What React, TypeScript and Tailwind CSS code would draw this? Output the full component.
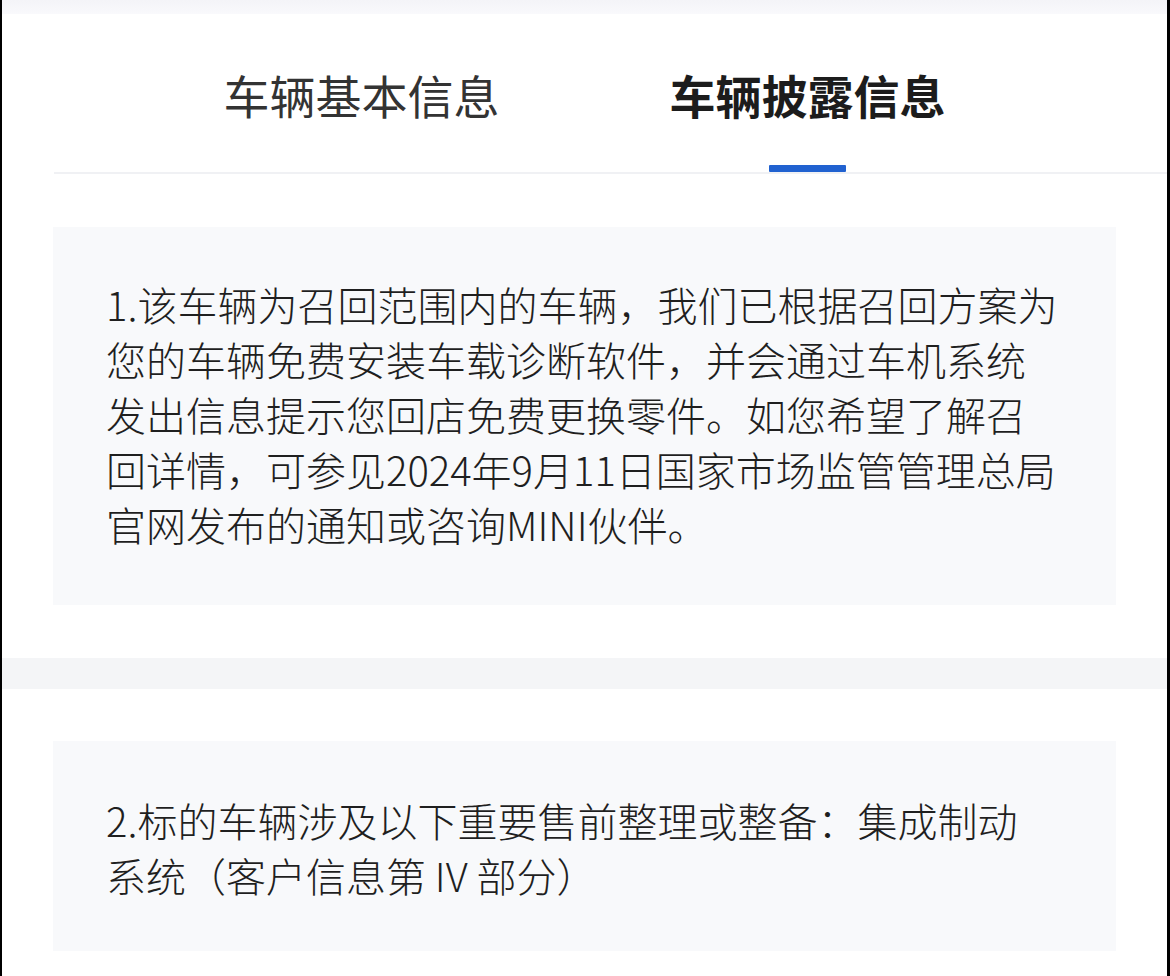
import React from "react";

const font = { fontFamily: '"Noto Sans CJK SC", "Noto Sans", sans-serif' };

export default function App() {
  return (
    <div
      className="w-[1170px] h-[976px] overflow-hidden bg-white border-l-2 border-r-[3px] border-black flex flex-col"
      style={font}
    >
      <div className="h-[14px] bg-gradient-to-b from-[#f4f4f8] to-[#f9f9fc] shrink-0" />
      <div className="flex justify-center gap-[170px] pt-[53px] shrink-0">
        <div className="flex flex-col items-center">
          <span className="text-[46px] leading-[54px] font-normal text-[#333333]">
            车辆基本信息
          </span>
        </div>
        <div className="flex flex-col items-center">
          <span className="text-[46px] leading-[54px] font-bold text-[#1c1c1c]">
            车辆披露信息
          </span>
          <div className="mt-[44px] w-[77px] h-[7px] bg-[#2162d0] rounded-[1px]" />
        </div>
      </div>
      <div className="ml-[52px] h-[2px] bg-[#f0f1f4] shrink-0" />
      <div className="mt-[53px] ml-[51px] mr-[51px] bg-[#f8f9fb] pt-[50px] pb-[53px] pl-[53px] pr-[20px] shrink-0">
        <p className="text-[40px] leading-[55px] font-light text-[#1f1f1f] whitespace-nowrap">
          1.该车辆为召回范围内的车辆，我们已根据召回方案为
          <br />
          您的车辆免费安装车载诊断软件，并会通过车机系统
          <br />
          发出信息提示您回店免费更换零件。如您希望了解召
          <br />
          回详情，可参见2024年9月11日国家市场监管管理总局
          <br />
          官网发布的通知或咨询MINI伙伴。
        </p>
      </div>
      <div className="mt-[53px] h-[31px] bg-[#f4f5f7] shrink-0" />
      <div className="mt-[52px] ml-[51px] mr-[51px] bg-[#f8f9fb] pt-[52px] pb-[48px] pl-[53px] pr-[20px] shrink-0">
        <p className="text-[40px] leading-[55px] font-light text-[#1f1f1f] whitespace-nowrap">
          2.标的车辆涉及以下重要售前整理或整备：集成制动
          <br />
          系统（客户信息第 IV 部分）
        </p>
      </div>
    </div>
  );
}
